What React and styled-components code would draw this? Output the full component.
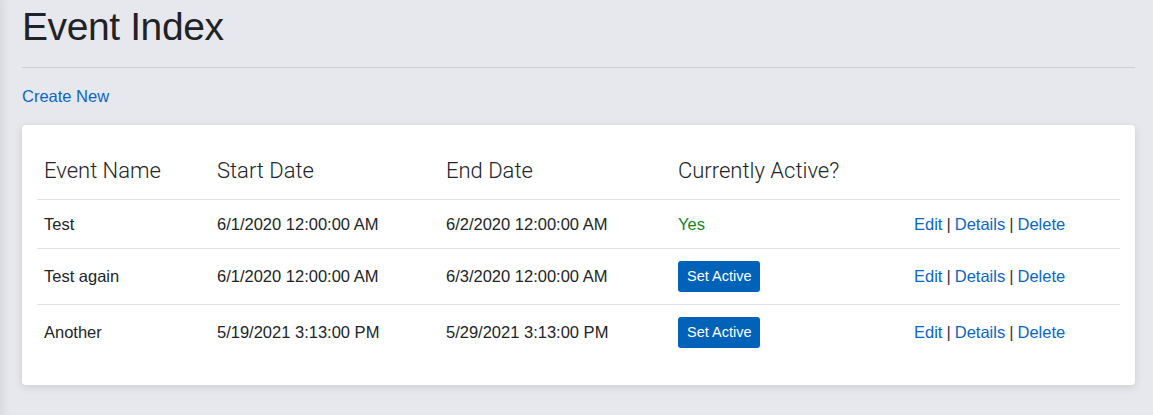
import React from 'react'
import styled, { createGlobalStyle } from 'styled-components'

const GlobalStyle = createGlobalStyle`
  html, body {
    margin: 0;
    background: #e7e8ed;
    font-family: 'Liberation Sans', Arial, sans-serif;
    color: #212529;
  }
`

const Page = styled.main`
  min-height: 415px;
  box-sizing: border-box;
  padding: 4px 18px 0 22px;
  box-shadow: inset 9px 0 8px -6px rgba(0, 0, 0, 0.08);
`

const Title = styled.h1`
  margin: 0;
  font-size: 39px;
  line-height: 1.2;
  font-weight: 400;
  letter-spacing: -0.4px;
  color: #1f2226;
`

const Rule = styled.hr`
  margin: 16px 0;
  border: 0;
  border-top: 1px solid #cdced4;
`

const Link = styled.a`
  color: #0a66c6;
  text-decoration: none;
  font-size: 16.5px;
  line-height: 24px;
  cursor: pointer;
`

const CreateLink = styled(Link)`
  display: inline-block;
  margin-bottom: 17px;
`

const Card = styled.section`
  background: #fff;
  border-radius: 4px;
  padding: 15px 15px 25px;
  box-shadow: 0 2px 8px rgba(0, 0, 0, 0.12);
`

const Table = styled.table`
  width: 100%;
  border-collapse: collapse;
  table-layout: fixed;
`

const Head = styled.th`
  box-sizing: border-box;
  text-align: left;
  font-family: Roboto, 'Liberation Sans', sans-serif;
  font-weight: 300;
  font-size: 22px;
  line-height: 27px;
  padding: 17px 7px 15px;
  color: #212529;
  border-bottom: 1px solid #dee2e6;
  width: ${p => p.$w}px;
`

const Row = styled.tr`
  & + & td {
    border-top: 1px solid #dee2e6;
  }
`

const Cell = styled.td`
  font-size: 16.5px;
  line-height: 24px;
  padding: 12px 7px;
  vertical-align: middle;
  color: #212529;
`

const Active = styled.span`
  color: #16832b;
`

const ActiveButton = styled.button`
  display: block;
  height: 31px;
  padding: 0 9px;
  border: 0;
  border-radius: 3px;
  background: #0062b8;
  color: #fff;
  font-family: 'Liberation Sans', Arial, sans-serif;
  font-size: 14.5px;
  cursor: pointer;
`

const Sep = styled.span`
  color: #333;
  margin: 0 4px;
`

const events = [
  { name: 'Test', start: '6/1/2020 12:00:00 AM', end: '6/2/2020 12:00:00 AM', active: true },
  { name: 'Test again', start: '6/1/2020 12:00:00 AM', end: '6/3/2020 12:00:00 AM', active: false },
  { name: 'Another', start: '5/19/2021 3:13:00 PM', end: '5/29/2021 3:13:00 PM', active: false },
]

const App = () => (
  <Page>
    <GlobalStyle />
    <Title>Event Index</Title>
    <Rule />
    <CreateLink>Create New</CreateLink>
    <Card>
      <Table>
        <thead>
          <tr>
            <Head $w={173}>Event Name</Head>
            <Head $w={229}>Start Date</Head>
            <Head $w={232}>End Date</Head>
            <Head $w={236}>Currently Active?</Head>
            <Head $w={213}></Head>
          </tr>
        </thead>
        <tbody>
          {events.map(ev => (
            <Row key={ev.name}>
              <Cell>{ev.name}</Cell>
              <Cell>{ev.start}</Cell>
              <Cell>{ev.end}</Cell>
              <Cell>
                {ev.active ? <Active>Yes</Active> : <ActiveButton>Set Active</ActiveButton>}
              </Cell>
              <Cell>
                <Link>Edit</Link><Sep>|</Sep><Link>Details</Link><Sep>|</Sep><Link>Delete</Link>
              </Cell>
            </Row>
          ))}
        </tbody>
      </Table>
    </Card>
  </Page>
)

export default App
